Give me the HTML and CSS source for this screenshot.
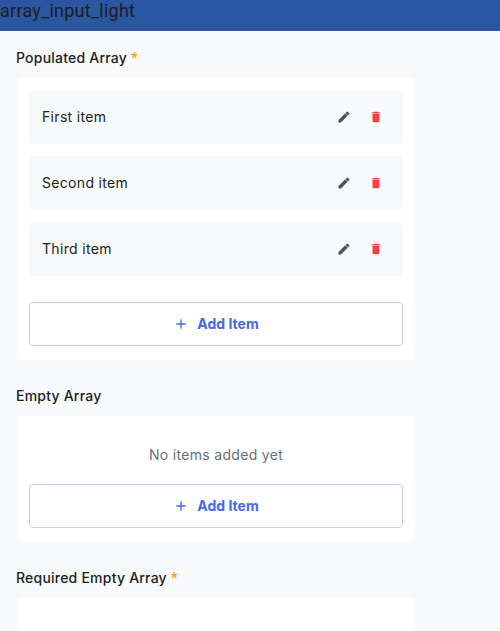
FILE: index.html
```html
<!DOCTYPE html>
<html lang="en">
<head>
<meta charset="utf-8">
<title>array_input_light</title>
<link rel="stylesheet" href="styles.css">
</head>
<body>
<svg class="defs" aria-hidden="true">
  <symbol id="edit" viewBox="0 0 24 24"><path d="M3 17.25V21h3.75L17.81 9.94l-3.75-3.75L3 17.25zM20.71 7.04a1 1 0 0 0 0-1.41l-2.34-2.34a1 1 0 0 0-1.41 0l-1.83 1.83 3.75 3.75 1.83-1.83z"/></symbol>
  <symbol id="trash" viewBox="0 0 24 24"><path d="M6 19c0 1.100.9 2 2 2h8c1.100 0 2-.9 2-2V7H6v12zM19 4h-3.500l-1-1h-5l-1 1H5v2h14V4z"/></symbol>
  <symbol id="plus" viewBox="0 0 24 24"><path d="M19 13h-6v6h-2v-6H5v-2h6V5h2v6h6v2z"/></symbol>
</svg>
<header class="topbar">array_input_light</header>
<main class="content">
  <section class="field">
    <h2 class="label">Populated Array <span class="required">*</span></h2>
    <div class="card">
      <ul class="items">
        <li class="item"><span class="item-text">First item</span><svg class="icon edit"><use href="#edit"/></svg><svg class="icon trash"><use href="#trash"/></svg></li>
        <li class="item"><span class="item-text">Second item</span><svg class="icon edit"><use href="#edit"/></svg><svg class="icon trash"><use href="#trash"/></svg></li>
        <li class="item"><span class="item-text">Third item</span><svg class="icon edit"><use href="#edit"/></svg><svg class="icon trash"><use href="#trash"/></svg></li>
      </ul>
      <button class="add"><svg class="plus"><use href="#plus"/></svg><span>Add Item</span></button>
    </div>
  </section>
  <section class="field">
    <h2 class="label">Empty Array</h2>
    <div class="card">
      <p class="empty">No items added yet</p>
      <button class="add"><svg class="plus"><use href="#plus"/></svg><span>Add Item</span></button>
    </div>
  </section>
  <section class="field">
    <h2 class="label">Required Empty Array <span class="required">*</span></h2>
    <div class="card card-cut"></div>
  </section>
</main>
</body>
</html>
```
FILE: styles.css
```css
* { box-sizing: border-box; margin: 0; padding: 0; }
html, body { height: 100%; overflow: hidden; }
body { display: flex; flex-direction: column; background: #f8f9fb; color: #1c1d20; font-family: Inter, "Liberation Sans", sans-serif; font-size: 14px; }
.defs { display: none; }
.topbar { flex: none; height: 31px; background: #2b56a2; color: #1c1d20; font-family: Roboto, sans-serif; font-size: 18px; line-height: 22px; letter-spacing: 0.25px; }
.content { flex: 1; min-height: 0; display: flex; flex-direction: column; width: 415px; padding: 17px 0 0 16px; }
.field { flex: none; margin-bottom: 26px; }
.field:last-child { flex: 1; display: flex; flex-direction: column; margin-bottom: 0; }
.label { height: 20px; font-size: 14px; font-weight: 500; line-height: 20px; letter-spacing: 0.22px; margin-bottom: 10px; }
.required { color: #ff9f0a; font-family: Roboto, sans-serif; font-size: 15px; font-weight: 700; line-height: 1; }
.card { margin-left: 1px; padding: 12px 12px 14px; background: #fff; border-radius: 5px; }
.card-cut { flex: 1; border-radius: 5px 5px 0 0; }
.items { list-style: none; display: flex; flex-direction: column; gap: 12px; margin-bottom: 26px; }
.item { height: 54px; display: flex; align-items: center; padding: 0 20px 0 13px; background: #f8f9fb; border-radius: 4px; }
.item-text { flex: 1; padding-bottom: 2px; letter-spacing: 0.32px; }
.icon { width: 14px; height: 14px; }
.edit { fill: #495057; stroke: #495057; stroke-width: 0.8; margin-right: 18px; }
.trash { fill: #f04444; }
.add { display: flex; align-items: center; justify-content: center; width: 100%; height: 44px; border: 1px solid #c2cef9; border-radius: 4px; background: #fff; color: #4568ee; font: 700 14px Inter, "Liberation Sans", sans-serif; }
.add span { padding-bottom: 1px; }
.plus { width: 16px; height: 16px; margin-right: 8px; fill: #4568ee; }
.empty { height: 56px; padding-top: 17px; line-height: 20px; text-align: center; color: #687078; letter-spacing: 0.32px; }
```
